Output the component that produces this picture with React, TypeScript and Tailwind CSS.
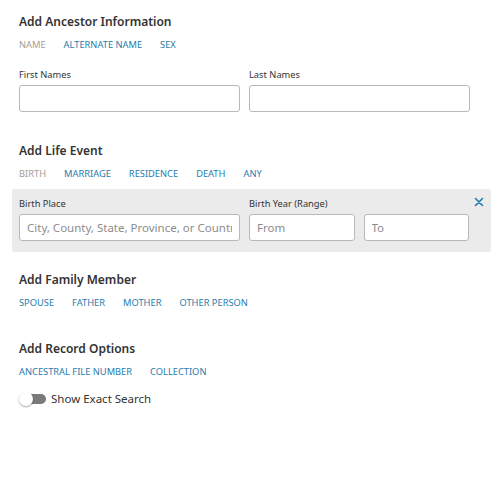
import React, { useState } from 'react';

const font = { fontFamily: '"Noto Sans", "Open Sans", Arial, sans-serif' };

const TabLinks: React.FC<{ items: string[]; active?: string }> = ({ items, active }) => (
  <div className="flex gap-[18px] text-[9.3px] leading-[14px] mt-[7px]">
    {items.map(item => (
      <button key={item} className={item === active ? 'text-[#a39d96] cursor-default' : 'text-[#1f7cad]'}>
        {item}
      </button>
    ))}
  </div>
);

const Field: React.FC<{ label?: string; placeholder?: string; className?: string }> = ({ label, placeholder, className }) => (
  <label className={`flex flex-col ${className ?? ''}`}>
    <span className="text-[9.3px] leading-[14px] text-[#333] h-[14px]">{label}</span>
    <input
      placeholder={placeholder}
      className="mt-[3px] h-[27px] w-full rounded-[3px] border border-[#b9b9b9] bg-white px-[7px] text-[11.5px] text-[#333] placeholder:text-[#8d8d8d] outline-none"
    />
  </label>
);

const SectionTitle: React.FC<{ children: React.ReactNode }> = ({ children }) => (
  <h2 className="text-[12px] leading-[18px] font-semibold text-[#333]">{children}</h2>
);

export default function App() {
  const [exact, setExact] = useState(false);

  return (
    <div className="w-[500px] h-[485px] bg-white text-[#333] overflow-hidden" style={font}>
      <div className="pt-[13px] px-[19px]">
        {/* ancestor */}
        <SectionTitle>Add Ancestor Information</SectionTitle>
        <TabLinks items={['NAME', 'ALTERNATE NAME', 'SEX']} active="NAME" />
        <div className="grid grid-cols-2 gap-[9px] mt-[16px] pr-[11px]">
          <Field label="First Names" />
          <Field label="Last Names" />
        </div>

        {/* life event */}
        <div className="mt-[30px]">
          <SectionTitle>Add Life Event</SectionTitle>
          <TabLinks items={['BIRTH', 'MARRIAGE', 'RESIDENCE', 'DEATH', 'ANY']} active="BIRTH" />
        </div>
      </div>

      <div className="ml-[12px] mr-[9px] mt-[8px] rounded-[3px] bg-[#ebebeb] pl-[7px] pr-[22px] pt-[8px] pb-[11px] relative">
        <button className="absolute right-[6px] top-[7px] text-[#1f7cad]">
          <svg width="12" height="12" viewBox="0 0 12 12" fill="none" stroke="currentColor" strokeWidth="1.6" strokeLinecap="round">
            <path d="M2.5 2.5l7 7M9.5 2.5l-7 7" />
          </svg>
        </button>
        <div className="grid grid-cols-[221px_1fr] gap-[9px]">
          <Field label="Birth Place" placeholder="City, County, State, Province, or Country" />
          <div className="flex flex-col">
            <span className="text-[9.3px] leading-[14px] text-[#333] h-[14px]">Birth Year (Range)</span>
            <div className="grid grid-cols-2 gap-[9px]">
              <Field placeholder="From" className="-mt-[14px]" />
              <Field placeholder="To" className="-mt-[14px]" />
            </div>
          </div>
        </div>
      </div>

      <div className="px-[19px] pt-[19px]">
        <SectionTitle>Add Family Member</SectionTitle>
        <TabLinks items={['SPOUSE', 'FATHER', 'MOTHER', 'OTHER PERSON']} />

        <div className="mt-[30px]">
          <SectionTitle>Add Record Options</SectionTitle>
          <TabLinks items={['ANCESTRAL FILE NUMBER', 'COLLECTION']} />
        </div>

        <label className="flex items-center mt-[12px] cursor-pointer" onClick={() => setExact(v => !v)}>
          <span className="relative w-[27px] h-[14px] flex items-center">
            <span className={`absolute left-[3px] right-0 h-[10px] rounded-full ${exact ? 'bg-[#1f7cad]' : 'bg-[#7a7a7a]'}`} />
            <span
              className={`absolute top-0 h-[14px] w-[14px] rounded-full bg-white shadow-[0_1px_2px_rgba(0,0,0,0.35)] ${exact ? 'left-[13px]' : 'left-0'}`}
            />
          </span>
          <span className="ml-[5px] text-[11.5px] leading-[16px] text-[#333]">Show Exact Search</span>
        </label>
      </div>
    </div>
  );
}
